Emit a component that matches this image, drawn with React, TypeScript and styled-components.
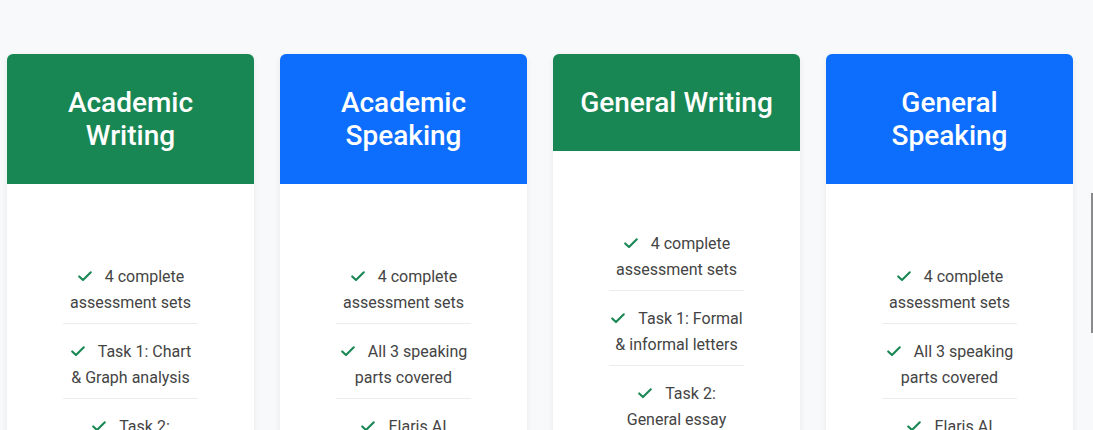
import styled, { createGlobalStyle } from "styled-components";

type Plan = {
    title: string;
    tone: "green" | "blue";
    features: string[];
}

const plans: Plan[] = [
    {
        title: "Academic Writing",
        tone: "green",
        features: ["4 complete assessment sets", "Task 1: Chart & Graph analysis", "Task 2: Academic essay writing", "Elaris AI feedback"],
    },
    {
        title: "Academic Speaking",
        tone: "blue",
        features: ["4 complete assessment sets", "All 3 speaking parts covered", "Elaris AI pronunciation feedback", "Band score estimate"],
    },
    {
        title: "General Writing",
        tone: "green",
        features: ["4 complete assessment sets", "Task 1: Formal & informal letters", "Task 2: General essay topics", "Elaris AI feedback"],
    },
    {
        title: "General Speaking",
        tone: "blue",
        features: ["4 complete assessment sets", "All 3 speaking parts covered", "Elaris AI pronunciation feedback", "Band score estimate"],
    },
];

const toneColors = {
    green: "#198754",
    blue: "#0d6efd",
};

function CheckIcon() {
    return (
        <CheckSvg viewBox="0 0 16 16" aria-hidden="true">
            <path d="M2.2 8.4 L6 12.1 L13.8 4.3" fill="none" stroke="currentColor" strokeWidth="2.1" strokeLinecap="round" strokeLinejoin="round"/>
        </CheckSvg>
    )
}

export default function App() {
    return (
        <>
            <GlobalStyle/>
            <PageStyle>
                <CardRowStyle>
                    {plans.map((plan) => (
                        <CardStyle key={plan.title}>
                            <CardHeaderStyle $tone={plan.tone}>
                                <CardTitleStyle>{plan.title}</CardTitleStyle>
                            </CardHeaderStyle>
                            <CardBodyStyle>
                                <FeatureListStyle>
                                    {plan.features.map((feature) => (
                                        <FeatureItemStyle key={feature}>
                                            <CheckIcon/>{feature}
                                        </FeatureItemStyle>
                                    ))}
                                </FeatureListStyle>
                            </CardBodyStyle>
                        </CardStyle>
                    ))}
                </CardRowStyle>
            </PageStyle>
            <SideTabStyle/>
        </>
    )
}

const GlobalStyle = createGlobalStyle`
  html, body {
    margin: 0;
    background: #f8f9fa;
    overflow: hidden;
  }

  body {
    font-family: Roboto, "Liberation Sans", sans-serif;
    color: #444;
  }
`;

const PageStyle = styled.main`
  padding: 54px 20px 40px 7px;
`;

const CardRowStyle = styled.div`
  display: flex;
  gap: 26px;
  align-items: flex-start;
`;

const CardStyle = styled.div`
  flex: 0 0 247px;
  display: flex;
  flex-direction: column;
  background: #fff;
  border-radius: 6px;
  overflow: hidden;
  box-shadow: 0 2px 6px rgba(0, 0, 0, 0.07);
`;

const CardHeaderStyle = styled.div<{ $tone: "green" | "blue" }>`
  background: ${({$tone}) => toneColors[$tone]};
  padding: 32px 24px;
  text-align: center;
`;

const CardTitleStyle = styled.h3`
  margin: 0;
  color: #fff;
  font-size: 28px;
  font-weight: 500;
  line-height: 33px;
`;

const CardBodyStyle = styled.div`
  padding: 65px 0 32px;
  display: flex;
  justify-content: center;
`;

const FeatureListStyle = styled.ul`
  list-style: none;
  margin: 0;
  padding: 0;
  width: 135px;
`;

const FeatureItemStyle = styled.li`
  padding: 15px 0 7px;
  font-size: 16px;
  line-height: 26px;
  text-align: center;
  color: #444;
  border-bottom: 1px solid #ececec;

  &:last-child {
    border-bottom: none;
  }
`;

const CheckSvg = styled.svg`
  width: 16px;
  height: 16px;
  color: #198754;
  vertical-align: -2px;
  margin-right: 12px;
`;

const SideTabStyle = styled.div`
  position: fixed;
  top: 193px;
  right: -40px;
  width: 40px;
  height: 140px;
  border-left: 2px solid #8a8a8a;
  background: #fff;
`;
